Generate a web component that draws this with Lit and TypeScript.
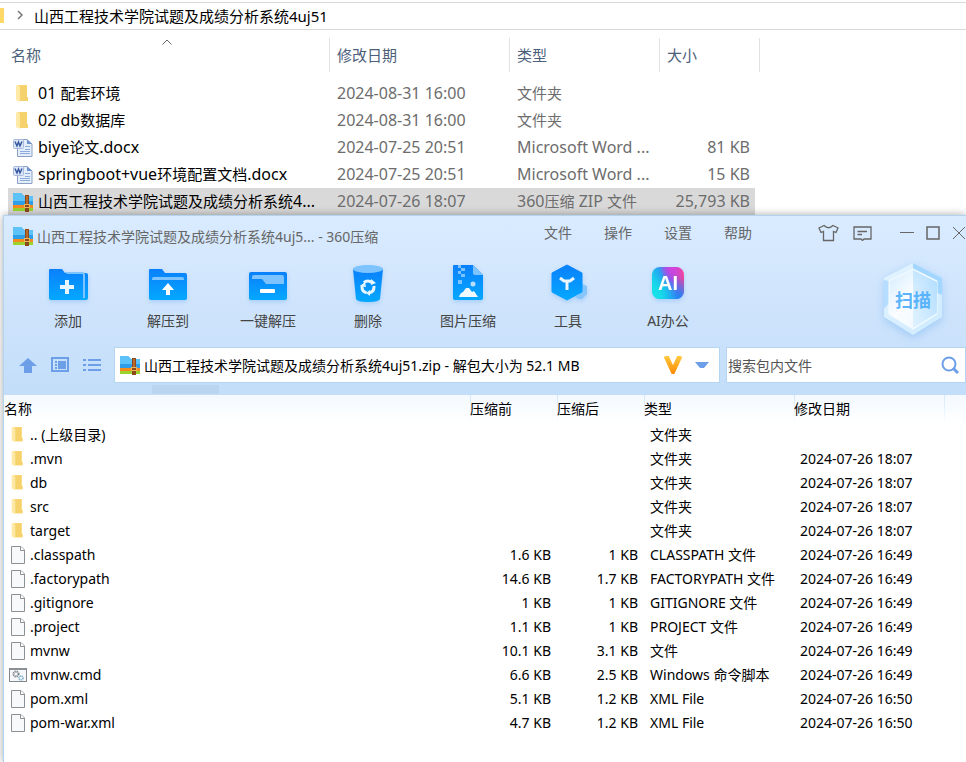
import { LitElement, html, css, svg, nothing, type TemplateResult } from "lit";
import { customElement, property } from "lit/decorators.js";
import { classMap } from "lit/directives/class-map.js";

type IconName = "folder" | "docx" | "zip" | "file" | "cmd";

interface ExplorerRow {
  icon: IconName;
  name: string;
  date: string;
  type: string;
  size: string;
  selected?: boolean;
}

interface ArchiveRow {
  icon: IconName;
  name: string;
  before: string;
  after: string;
  type: string;
  date: string;
}

const ICONS: Record<IconName, TemplateResult> = {
  folder: html`<svg width="20" height="20" viewBox="0 0 20 20" aria-hidden="true">
    <path d="M5 1H14V13H15V17H6Z" fill="#fbd879" />
    <path d="M7 2L14 1V13H15V17H7Z" fill="#f6d26d" />
    <path d="M3 1L7 3V18L3 16Z" fill="#ffe9a6" />
  </svg>`,
  docx: html`<svg width="20" height="20" viewBox="0 0 20 20" aria-hidden="true">
    <path d="M4.500 1.500H14L19 6V18.500H4.500Z" fill="#e4edfa" stroke="#8ba0c6" />
    <path d="M14 1.500L19 6H14Z" fill="#6f93cf" />
    <path d="M12 8.500H17M12 11.500H17M7 13.500H17M7 15.500H17" stroke="#8cabdc" />
    <rect x="0.500" y="1.500" width="10" height="9" rx="1" fill="#dbe5f6" stroke="#a9bbdd" />
    <path d="M2 3.500L4 8L5.500 4L7 8L9 3.500" fill="none" stroke="#33559f" stroke-width="1.400" />
  </svg>`,
  zip: html`<svg width="20" height="20" viewBox="0 0 20 20" aria-hidden="true">
    <path d="M0 2Q0 1 1 1H8L11 4H19Q20 4 20 5V14H0Z" fill="#2f9ee8" />
    <path d="M0 2Q0 1 1 1H8L11 4H19Q20 4 20 5V9H0Z" fill="#5cc2f8" />
    <rect y="13" width="20" height="3" fill="#f58a1f" />
    <rect y="16" width="20" height="3" fill="#9bd42e" />
    <rect x="12" y="3" width="4" height="17" fill="#8c4a1c" />
    <rect x="13" y="4" width="2" height="8" fill="#b9692b" />
    <rect x="11.500" y="12.500" width="5" height="3" fill="#8c4a1c" stroke="#efb65a" />
  </svg>`,
  file: html`<svg width="18" height="20" viewBox="0 0 18 20" aria-hidden="true">
    <path d="M2.500 1.500H12L15.500 5V18.500H2.500Z" fill="#f8f9fa" stroke="#8c8f93" />
    <path d="M11.500 1.500V5.500H15.500" fill="#fff" stroke="#8c8f93" />
  </svg>`,
  cmd: html`<svg width="18" height="20" viewBox="0 0 18 20" aria-hidden="true">
    <rect x="0.500" y="3.500" width="17" height="13" fill="#f6f8fa" stroke="#83888e" />
    <rect x="1" y="3" width="16" height="2" fill="#8b9097" />
    <circle cx="7" cy="9" r="2.500" fill="none" stroke="#7f8790" stroke-width="2" stroke-dasharray="1.300 0.700" />
    <circle cx="12" cy="13" r="2" fill="none" stroke="#79aecd" stroke-width="1.600" stroke-dasharray="1.200 0.600" />
  </svg>`,
};

const EXPLORER_ROWS: ExplorerRow[] = [
  { icon: "folder", name: "01 配套环境", date: "2024-08-31 16:00", type: "文件夹", size: "" },
  { icon: "folder", name: "02 db数据库", date: "2024-08-31 16:00", type: "文件夹", size: "" },
  { icon: "docx", name: "biye论文.docx", date: "2024-07-25 20:51", type: "Microsoft Word ...", size: "81 KB" },
  { icon: "docx", name: "springboot+vue环境配置文档.docx", date: "2024-07-25 20:51", type: "Microsoft Word ...", size: "15 KB" },
  { icon: "zip", name: "山西工程技术学院试题及成绩分析系统4...", date: "2024-07-26 18:07", type: "360压缩 ZIP 文件", size: "25,793 KB", selected: true },
];

const row = (
  icon: IconName, name: string, before: string, after: string, type: string, date: string,
): ArchiveRow => ({ icon, name, before, after, type, date });

const ARCHIVE_ROWS: ArchiveRow[] = [
  row("folder", ".. (上级目录)", "", "", "文件夹", ""),
  row("folder", ".mvn", "", "", "文件夹", "2024-07-26 18:07"),
  row("folder", "db", "", "", "文件夹", "2024-07-26 18:07"),
  row("folder", "src", "", "", "文件夹", "2024-07-26 18:07"),
  row("folder", "target", "", "", "文件夹", "2024-07-26 18:07"),
  row("file", ".classpath", "1.6 KB", "1 KB", "CLASSPATH 文件", "2024-07-26 16:49"),
  row("file", ".factorypath", "14.6 KB", "1.7 KB", "FACTORYPATH 文件", "2024-07-26 16:49"),
  row("file", ".gitignore", "1 KB", "1 KB", "GITIGNORE 文件", "2024-07-26 16:49"),
  row("file", ".project", "1.1 KB", "1 KB", "PROJECT 文件", "2024-07-26 16:49"),
  row("file", "mvnw", "10.1 KB", "3.1 KB", "文件", "2024-07-26 16:49"),
  row("cmd", "mvnw.cmd", "6.6 KB", "2.5 KB", "Windows 命令脚本", "2024-07-26 16:49"),
  row("file", "pom.xml", "5.1 KB", "1.2 KB", "XML File", "2024-07-26 16:50"),
  row("file", "pom-war.xml", "4.7 KB", "1.2 KB", "XML File", "2024-07-26 16:50"),
];

/** Latin runs are set one size larger than the Chinese characters beside them. */
const mixed = (text: string) =>
  text
    .split(/([\u4e00-\u9fff]+)/)
    .filter(Boolean)
    .map((run) => (/[\u4e00-\u9fff]/.test(run) ? run : html`<span class="latin">${run}</span>`));

const blueFill = svg`<linearGradient id="blue" x1="0" y1="0" x2="0" y2="1">
  <stop offset="0" stop-color="#0a80fb" /><stop offset="1" stop-color="#04a8ff" />
</linearGradient>`;

const tool = (art: unknown) => html`<svg class="tool-art" width="40" height="40" viewBox="0 0 40 40" aria-hidden="true">
  <defs>${blueFill}</defs>${art}
</svg>`;

const TOOLS: { label: string; art: TemplateResult }[] = [
  {
    label: "添加",
    art: tool(svg`
      <path d="M1 7Q1 6 2 6H14L17 10H38Q40 10 40 12V35Q40 37 38 37H3Q1 37 1 35Z" fill="url(#blue)" />
      <path d="M17 9H34Q37 9 37 12V35H35V12Q35 11 34 11H19Z" fill="#7cc3ff" />
      <path d="M19 17V31M12 24H26" stroke="#e9f6ff" stroke-width="4" />`),
  },
  {
    label: "解压到",
    art: tool(svg`
      <path d="M1 7Q1 6 2 6H14L17 10H37Q39 10 39 12V35Q39 37 37 37H3Q1 37 1 35Z" fill="url(#blue)" />
      <path d="M4 17V16Q4 14 6 14H34Q36 14 36 16V17Z" fill="#7cc3ff" />
      <path d="M20 20L26 27H22V32H18V27H14Z" fill="#fff" />`),
  },
  {
    label: "一键解压",
    art: tool(svg`
      <rect x="1" y="9" width="38" height="28" rx="2" fill="url(#blue)" />
      <path d="M4 14Q4 12 6 12H34Q36 12 36 14V21H18L14 16H4Z" fill="#7cc3ff" />
      <rect x="12" y="26" width="15" height="4" rx="1" fill="#fff" />`),
  },
  {
    label: "删除",
    art: tool(svg`
      <path d="M5 6H35L32 36Q31 39 20 39T8 36Z" fill="url(#blue)" />
      <ellipse cx="20" cy="6" rx="15" ry="4" fill="#7cc3ff" />
      <circle cx="20" cy="24" r="6" fill="none" stroke="#e8f7ff" stroke-width="3" stroke-dasharray="9.570 3" stroke-dashoffset="2" />
      <path d="M23 16L28 20L23 22ZM22 27V33L18 30ZM12 23L17 19L18 24Z" fill="#e8f7ff" />`),
  },
  {
    label: "图片压缩",
    art: tool(svg`
      <path d="M5 3Q5 2 6 2H25L35 12V35Q35 37 33 37H7Q5 37 5 35Z" fill="url(#blue)" />
      <path d="M25 2L35 12H27Q25 12 25 10Z" fill="#7cc3ff" />
      <path d="M10 2H13V5H10ZM13 5H17V8H13ZM10 8H13V11H10ZM13 11H17V14H13ZM10 17H14V21H10Z" fill="#7cc3ff" />
      <path d="M11 34Q12 30 15 29L18 25H21L24 29L26 28L30 34Z" fill="#f0f9ff" />
      <circle cx="25" cy="21" r="2.500" fill="#b5dfff" />`),
  },
  {
    label: "工具",
    art: tool(svg`
      <path d="M32 20L39 23V31L34 36H31L27 34L32 31Z" fill="#85c5fb" />
      <path d="M19 2L34 10V29L19 37L4 29V10Z" fill="url(#blue)" stroke="url(#blue)" stroke-linejoin="round" />
      <path d="M12 15L16 18H22L26 15M19 18V27" fill="none" stroke="#eaf6ff" stroke-width="3" />`),
  },
  {
    label: "AI办公",
    art: html`<svg class="tool-art" width="40" height="40" viewBox="0 0 40 40" aria-hidden="true">
      <defs>
        <linearGradient id="ai-base" x1="0" y1="0.600" x2="1" y2="0.200">
          <stop offset="0" stop-color="#12dde8" /><stop offset="0.350" stop-color="#25a6f2" />
          <stop offset="0.600" stop-color="#8b55ec" /><stop offset="1" stop-color="#fb4590" />
        </linearGradient>
        <radialGradient id="ai-pink" cx="0.650" cy="0.050" r="0.400">
          <stop offset="0" stop-color="#d542e0" /><stop offset="1" stop-color="#d542e0" stop-opacity="0" />
        </radialGradient>
        <radialGradient id="ai-blue" cx="0.850" cy="1" r="0.650">
          <stop offset="0" stop-color="#168bf4" /><stop offset="1" stop-color="#168bf4" stop-opacity="0" />
        </radialGradient>
        <radialGradient id="ai-cyan" cx="0.150" cy="0.900" r="0.650">
          <stop offset="0" stop-color="#16e0e8" /><stop offset="1" stop-color="#16e0e8" stop-opacity="0" />
        </radialGradient>
      </defs>
      <rect x="4" y="4" width="32" height="32" rx="8" fill="url(#ai-base)" />
      <rect x="4" y="4" width="32" height="32" rx="8" fill="url(#ai-pink)" />
      <rect x="4" y="4" width="32" height="32" rx="8" fill="url(#ai-blue)" />
      <rect x="4" y="4" width="32" height="32" rx="8" fill="url(#ai-cyan)" />
      <text class="ai-text" x="20" y="27" text-anchor="middle">AI</text>
    </svg>`,
  },
];

const shared = css`
  :host {
    display: block;
    font-family: "Noto Sans", "Noto Sans CJK SC", sans-serif;
  }
  * {
    box-sizing: border-box;
  }
  svg {
    display: block;
    flex: none;
  }
  table {
    border-collapse: separate;
    border-spacing: 0;
    table-layout: fixed;
  }
  th,
  td {
    padding: 0;
    font-weight: 400;
    text-align: left;
    white-space: nowrap;
  }
  button,
  input {
    font: inherit;
    color: inherit;
    border: 0;
    padding: 0;
    margin: 0;
    background: none;
  }
  .name {
    display: flex;
    align-items: center;
  }
  .number {
    text-align: right;
  }
`;

@customElement("file-explorer")
export class FileExplorer extends LitElement {
  @property({ attribute: false }) rows: ExplorerRow[] = [];

  static styles = [
    shared,
    css`
      :host {
        font-size: 15px;
        color: #000;
      }
      .path {
        display: flex;
        align-items: center;
        height: 28px;
        margin-top: 2px;
        padding-bottom: 2px;
        border-top: 1px solid #d9d9d9;
        border-bottom: 1px solid #d9d9d9;
      }
      .path-folder {
        width: 4px;
        height: 15px;
        background: #ffd968;
      }
      .chevron {
        margin: 0 11px 0 13px;
      }
      .list {
        width: 752px;
        margin: 8px 0 0 8px;
        line-height: 27px;
      }
      .col-name { width: 322px; }
      .col-date { width: 180px; }
      .col-type { width: 150px; }
      .list th {
        position: relative;
        height: 34px;
        padding-left: 7px;
        border-right: 1px solid #e2e2e2;
        color: #4c607a;
      }
      .list th:first-child {
        padding-left: 3px;
      }
      .sort {
        position: absolute;
        top: 1px;
        left: 48%;
      }
      .gap td {
        height: 8px;
      }
      .list tbody td {
        height: 27px;
        padding-left: 7px;
        color: #6d6d6d;
      }
      .list .gap td {
        height: 8px;
      }
      .list tbody .number {
        padding: 0 5px 0 0;
        border-right: 5px solid transparent;
        background-clip: padding-box;
      }
      .list tbody td:first-child {
        padding-left: 5px;
        color: #000;
      }
      .selected td {
        background-color: #d9d9d9;
      }
      .name {
        gap: 5px;
        height: 27px;
      }
      .latin {
        font-size: 16px;
        line-height: 20px;
      }
    `,
  ];

  render() {
    return html`
      <nav class="path" aria-label="路径">
        <span class="path-folder"></span>
        <svg class="chevron" width="6" height="10" viewBox="0 0 6 10" aria-hidden="true">
          <path d="M1 1L5 5L1 9" fill="none" stroke="#777" stroke-width="1.500" />
        </svg>
        <span>山西工程技术学院试题及成绩分析系统4uj51</span>
      </nav>
      <table class="list">
        <colgroup>
          <col class="col-name" /><col class="col-date" /><col class="col-type" /><col />
        </colgroup>
        <thead>
          <tr>
            <th>
              名称
              <svg class="sort" width="10" height="6" viewBox="0 0 10 6" aria-hidden="true">
                <path d="M0.500 5.500L5 1L9.500 5.500" fill="none" stroke="#666" />
              </svg>
            </th>
            <th>修改日期</th>
            <th>类型</th>
            <th>大小</th>
          </tr>
        </thead>
        <tbody>
          <tr class="gap" aria-hidden="true"><td colspan="4"></td></tr>
          ${this.rows.map(
            (r) => html`<tr class=${classMap({ selected: !!r.selected })}>
              <td><div class="name">${ICONS[r.icon]}<span>${mixed(r.name)}</span></div></td>
              <td>${mixed(r.date)}</td>
              <td>${mixed(r.type)}</td>
              <td class="number">${mixed(r.size)}</td>
            </tr>`,
          )}
        </tbody>
      </table>
    `;
  }
}

@customElement("archive-window")
export class ArchiveWindow extends LitElement {
  @property({ attribute: false }) rows: ArchiveRow[] = [];

  static styles = [
    shared,
    css`
      :host {
        font-size: 14px;
        color: #000;
        background: #fff;
        border-top: 1px solid #b4d3ef;
        border-left: 1px solid #b4d3ef;
        box-shadow: 0 0 8px rgba(0, 0, 0, 0.35);
        overflow: hidden;
      }
      .head {
        background: linear-gradient(#d9ebff, #cfe4fc 50%, #c3defa);
      }
      .titlebar {
        display: flex;
        height: 36px;
        color: #666;
      }
      .title {
        display: flex;
        align-items: center;
        gap: 4px;
        flex: 1;
        padding: 4px 0 0 9px;
      }
      .menus {
        display: flex;
        gap: 32px;
        margin-right: 66px;
        padding-bottom: 4px;
      }
      .window-buttons {
        display: flex;
        align-items: center;
        padding-bottom: 2px;
      }
      .shirt { margin-right: 14px; }
      .feedback { margin-right: 28px; }
      .minimize { margin-right: 12px; }
      .maximize { margin-right: 12px; }
      .close {
        width: 14px;
        overflow: hidden;
      }
      .toolbar {
        display: flex;
        height: 82px;
        padding: 11px 23px 0 14px;
        color: #444;
      }
      .tool {
        display: flex;
        flex-direction: column;
        align-items: center;
        gap: 8px;
        width: 100px;
        height: 68px;
        line-height: 20px;
      }
      .tool-art {
        filter: drop-shadow(0 2px 2px rgba(50, 140, 240, 0.25));
      }
      .ai-text {
        font: 700 20px "Liberation Sans", sans-serif;
        fill: #fff;
      }
      .scan {
        display: grid;
        place-items: center;
        width: 60px;
        height: 72px;
        margin-left: auto;
        color: #5bb4fb;
        font-size: 18px;
        font-weight: 700;
      }
      .scan svg,
      .scan span {
        grid-area: 1 / 1;
      }
      .scan span {
        z-index: 1;
      }
      .scan svg {
        filter: drop-shadow(0 3px 4px rgba(80, 160, 240, 0.35));
      }
      .nav {
        display: flex;
        align-items: center;
        padding: 13px 0 2px 14px;
      }
      .nav-button {
        display: grid;
        place-items: center;
        width: 20px;
        height: 24px;
        margin-right: 12px;
      }
      .box {
        display: flex;
        align-items: center;
        height: 36px;
        background: #fff;
        border: 1px solid #b5d6f3;
      }
      .address {
        flex: 1;
        gap: 4px;
        padding: 0 10px 0 5px;
      }
      .box input {
        flex: 1;
        min-width: 0;
        height: 24px;
        outline: 0;
      }
      .vip {
        margin-right: 8px;
      }
      .search {
        width: 240px;
        margin-left: 6px;
        padding: 0 6px 0 1px;
      }
      .search input::placeholder {
        color: #555;
        opacity: 1;
      }
      .strip {
        height: 10px;
        padding-left: 148px;
      }
      .thumb {
        width: 67px;
        height: 9px;
        background: #b9d5f0;
      }
      .entries {
        width: 100%;
        line-height: 24px;
      }
      .col-name { width: 466px; }
      .col-size { width: 87px; }
      .col-wide { width: 150px; }
      .entries thead tr {
        background: linear-gradient(#f3f9ff, #fff);
      }
      .entries th {
        height: 28px;
        background: linear-gradient(#d0e6fb, #fff) no-repeat left / 1px 100%;
      }
      .entries th:first-child {
        background: none;
      }
      .entries td {
        padding: 0 0 0 6px;
      }
      .entries td:first-child {
        padding-left: 5px;
      }
      .entries .number {
        padding: 0 6px 0 0;
      }
      .name {
        gap: 3px;
      }
      .name svg {
        width: 18px;
      }
    `,
  ];

  render() {
    return html`
      <header class="head">
        <div class="titlebar">
          <div class="title">${ICONS.zip}<span>山西工程技术学院试题及成绩分析系统4uj5... - 360压缩</span></div>
          <div class="menus">
            ${["文件", "操作", "设置", "帮助"].map((m) => html`<button>${m}</button>`)}
          </div>
          <div class="window-buttons">
            <button class="shirt" aria-label="换肤">
              <svg width="21" height="18" viewBox="0 0 21 18" aria-hidden="true">
                <path d="M6 1.500L1 4L3 8.500L5.500 7.500V16.500H15.500V7.500L18 8.500L20 4L15 1.500Q10.500 6 6 1.500Z" fill="none" stroke="#666" stroke-width="1.300" />
              </svg>
            </button>
            <button class="feedback" aria-label="反馈">
              <svg width="19" height="16" viewBox="0 0 19 16" aria-hidden="true">
                <path d="M1 2H18V14H11L9.500 15.500L8 14H1ZM4.500 6.500H14M4.500 9.500H9" fill="none" stroke="#666" stroke-width="1.300" />
              </svg>
            </button>
            <button class="minimize" aria-label="最小化">
              <svg width="14" height="14" viewBox="0 0 14 14" aria-hidden="true"><path d="M0 6.500H14" stroke="#666" /></svg>
            </button>
            <button class="maximize" aria-label="最大化">
              <svg width="14" height="14" viewBox="0 0 14 14" aria-hidden="true">
                <path d="M1 1H13V13H1Z" fill="none" stroke="#666" stroke-width="1.500" />
              </svg>
            </button>
            <button class="close" aria-label="关闭">
              <svg width="14" height="14" viewBox="0 0 14 14" aria-hidden="true"><path d="M1 1L13 13M13 1L1 13" stroke="#666" /></svg>
            </button>
          </div>
        </div>

        <div class="toolbar">
          ${TOOLS.map((t) => html`<button class="tool">${t.art}<span>${t.label}</span></button>`)}
          <button class="scan">
            <svg width="60" height="72" viewBox="0 0 60 72" aria-hidden="true">
              <defs>
                <linearGradient id="hex" x1="0" y1="0" x2="1" y2="1">
                  <stop offset="0" stop-color="#e4f4ff" /><stop offset="1" stop-color="#cdeaff" />
                </linearGradient>
                <linearGradient id="face" x1="0" y1="0" x2="1" y2="1">
                  <stop offset="0" stop-color="#d3ecff" /><stop offset="0.450" stop-color="#fbfdff" /><stop offset="1" stop-color="#e8f6ff" />
                </linearGradient>
                <linearGradient id="half" x1="0" y1="1" x2="1" y2="0">
                  <stop offset="0" stop-color="#b5dfff" stop-opacity="0.300" /><stop offset="1" stop-color="#9bd3ff" stop-opacity="0.800" />
                </linearGradient>
              </defs>
              <path d="M30 0L59 15V54L30 72L1 54V15Z" fill="url(#hex)" />
              <path d="M30 0L59 15V32L54 30V18L30 6Z" fill="#a3d7ff" />
              <path d="M1 17L6 18V40L1 46Z" fill="#b5ddff" />
              <path d="M30 6L54 18V51L30 66L6 51V18Z" fill="url(#face)" stroke="#f8fdff" />
              <path d="M30 7L54 19V50L30 65Z" fill="url(#half)" />
            </svg>
            <span>扫描</span>
          </button>
        </div>

        <div class="nav">
          <button class="nav-button" aria-label="上一级">
            <svg width="18" height="16" viewBox="0 0 18 16" aria-hidden="true"><path d="M9 1L18 9H13V16H5V9H0Z" fill="#6c9fe8" /></svg>
          </button>
          <button class="nav-button" aria-label="预览">
            <svg width="18" height="16" viewBox="0 0 18 16" aria-hidden="true">
              <path d="M1 1H17V14H1Z" fill="none" stroke="#6c9fe8" stroke-width="2" />
              <path d="M7 4H15V12H7ZM4 4H6V6H4ZM4 7H6V9H4ZM4 10H6V12H4Z" fill="#6c9fe8" />
            </svg>
          </button>
          <button class="nav-button" aria-label="列表">
            <svg width="18" height="14" viewBox="0 0 18 14" aria-hidden="true">
              <path d="M0 2H3M5 2H18M0 7H3M5 7H18M0 12H3M5 12H18" stroke="#6c9fe8" stroke-width="2" />
            </svg>
          </button>
          <div class="box address">
            ${ICONS.zip}
            <input type="text" aria-label="地址" .value=${"山西工程技术学院试题及成绩分析系统4uj51.zip - 解包大小为 52.1 MB"} />
            <svg class="vip" width="20" height="18" viewBox="0 0 20 18" aria-hidden="true">
              <defs>
                <linearGradient id="gold" gradientUnits="userSpaceOnUse" x1="0" y1="0" x2="0" y2="18">
                  <stop offset="0" stop-color="#ffc93e" /><stop offset="1" stop-color="#fb8a05" />
                </linearGradient>
              </defs>
              <path d="M3 0L10 15L17 0" fill="none" stroke="url(#gold)" stroke-width="5" />
            </svg>
            <button aria-label="历史记录">
              <svg width="14" height="8" viewBox="0 0 14 8" aria-hidden="true"><path d="M0 1H14L9 7H5Z" fill="#6c9fe8" /></svg>
            </button>
          </div>
          <div class="box search">
            <input type="text" aria-label="搜索包内文件" placeholder="搜索包内文件" />
            <button aria-label="搜索">
              <svg width="18" height="18" viewBox="0 0 18 18" aria-hidden="true">
                <circle cx="8" cy="8" r="6.500" fill="none" stroke="#6c9fe8" stroke-width="2" />
                <path d="M12 12L17 17" stroke="#6c9fe8" stroke-width="3" />
              </svg>
            </button>
          </div>
        </div>
        <div class="strip"><div class="thumb"></div></div>
      </header>

      <table class="entries">
        <colgroup>
          <col class="col-name" /><col class="col-size" /><col class="col-size" />
          <col class="col-wide" /><col class="col-wide" /><col />
        </colgroup>
        <thead>
          <tr>
            <th>名称</th><th>压缩前</th><th>压缩后</th><th>类型</th><th>修改日期</th><th></th>
          </tr>
        </thead>
        <tbody>
          ${this.rows.map(
            (r) => html`<tr>
              <td><div class="name">${ICONS[r.icon]}<span>${r.name}</span></div></td>
              <td class="number">${r.before || nothing}</td>
              <td class="number">${r.after || nothing}</td>
              <td>${r.type}</td>
              <td>${r.date || nothing}</td>
              <td></td>
            </tr>`,
          )}
        </tbody>
      </table>
    `;
  }
}

@customElement("app-root")
export class AppRoot extends LitElement {
  static styles = css`
    :host {
      display: flex;
      flex-direction: column;
      min-height: 100vh;
      background: #fff;
      overflow: hidden;
    }
    .archive {
      flex: 1;
      margin-left: 3px;
      position: relative;
    }
  `;

  render() {
    return html`
      <file-explorer .rows=${EXPLORER_ROWS}></file-explorer>
      <archive-window class="archive" .rows=${ARCHIVE_ROWS}></archive-window>
    `;
  }
}
